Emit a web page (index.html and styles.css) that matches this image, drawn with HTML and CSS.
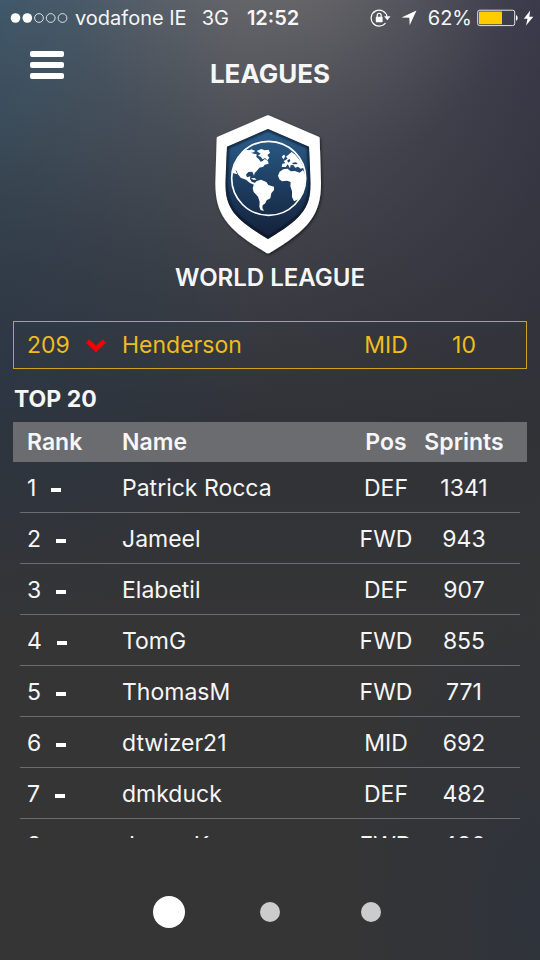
FILE: index.html
```html
<!DOCTYPE html>
<html lang="en">
<head>
<meta charset="utf-8">
<meta name="viewport" content="width=device-width, initial-scale=1">
<title>Leagues</title>
<link rel="stylesheet" href="styles.css">
</head>
<body>
<div class="app">
  <div class="status">
    <div class="status-left">
      <svg class="signal" width="58" height="12" viewBox="0 0 58 12" aria-hidden="true">
        <g fill="#fff"><circle cx="5.500" cy="6" r="4.800"/><circle cx="17.300" cy="6" r="4.800"/></g>
        <g fill="none" stroke="#fff" stroke-width=".8"><circle cx="29" cy="6" r="4.400"/><circle cx="40.700" cy="6" r="4.400"/><circle cx="52.500" cy="6" r="4.400"/></g>
      </svg>
      <span>vodafone IE</span>
      <span class="network">3G</span>
      <span class="clock">12:52</span>
    </div>
    <div class="status-right">
      <svg class="lock" width="21" height="18" viewBox="0 0 21 18" aria-hidden="true">
        <path d="M15.500 14A8 8 0 1 1 17 7.500" fill="none" stroke="#fff" stroke-width="1.200"/>
        <path d="M14 7.300h6.500l-3.200 4z" fill="#fff"/>
        <rect x="5.800" y="7.800" width="6.800" height="5.400" rx=".6" fill="#fff"/>
        <path d="M7.200 8.500V6.400a2 2 0 0 1 4 0v2.100" fill="none" stroke="#fff" stroke-width="1.200"/>
      </svg>
      <svg class="arrow" width="16" height="16" viewBox="0 0 16 16" aria-hidden="true"><path d="M15.500.5 8.700 15.300 8.300 7.800.5 7.500z" fill="#fff"/></svg>
      <span>62%</span>
      <svg class="battery" width="42" height="18" viewBox="0 0 42 18" aria-hidden="true">
        <rect x=".7" y="1.200" width="37" height="15.400" rx="2" fill="none" stroke="#fff" stroke-opacity=".85"/>
        <rect x="2" y="2.500" width="23" height="12.800" rx=".6" fill="#fc0"/>
        <path d="M39 6.300c2.200.5 2.200 5 0 5.400z" fill="#fff"/>
      </svg>
      <svg class="bolt" width="11" height="16" viewBox="0 0 11 16" aria-hidden="true"><path d="M7.200.5.800 8.700h3.700L3 15.500l7.300-8.700H6.300z" fill="#fff"/></svg>
    </div>
  </div>

  <header class="topbar">
    <button class="menu" type="button" aria-label="Menu"><i></i><i></i><i></i></button>
    <h1>LEAGUES</h1>
  </header>

  <main class="content">
    <section class="league">
      <svg class="shield" width="112" height="144" viewBox="42 26 336 432" role="img" aria-label="World League crest">
        <defs>
          <linearGradient id="navy" x1="0" y1="0" x2="0" y2="1"><stop offset="0" stop-color="#2d6290"/><stop offset=".5" stop-color="#1e3f62"/><stop offset="1" stop-color="#131f38"/></linearGradient>
          <filter id="shadow" x="-10%" y="-10%" width="120%" height="120%"><feDropShadow dx="3" dy="4" stdDeviation="4" flood-color="#000" flood-opacity=".6"/></filter>
          <filter id="inset" x="-10%" y="-10%" width="120%" height="120%"><feGaussianBlur stdDeviation="4"/></filter>
          <clipPath id="inner"><path d="M204 74L327 127L332 236C332 315 300 346 204 404C108 346 76 315 76 236L81 127Z"/></clipPath>
          <clipPath id="disc"><circle cx="206" cy="222" r="110"/></clipPath>
        </defs>
        <path d="M197 35Q204 31 211 35L356 97Q359 98 359 102L363 236C363 333 325 376 210 445Q204 449 198 445C83 376 46 333 46 236L50 102Q50 98 53 97Z" fill="#fff" filter="url(#shadow)"/>
        <g clip-path="url(#inner)">
          <path d="M70 60h270v350H70z" fill="url(#navy)"/>
          <path d="M204 74L327 127L332 236C332 315 300 346 204 404C108 346 76 315 76 236L81 127Z" fill="none" stroke="#08111f" stroke-width="8" filter="url(#inset)"/>
        </g>
        <g fill="#fff" clip-path="url(#disc)">
          <path d="M98 206L98 178L112 152L134 136L150 138L156 147L170 150L169 158L176 164L182 172L188 170L194 164L204 170L206 178L194 181L190 187L178 190L170 200L164 206L162 214L157 202L145 203L138 211L141 219L151 216L150 224L155 232L166 236L162 241L150 236L138 226L122 220L114 210L110 200L106 196L112 210L106 208Z"/>
          <path d="M144 141L154 135L166 140L158 145ZM170 140L184 134L194 138L206 136L210 146L202 152L208 160L202 168L195 161L188 165L182 157L174 154L182 148Z"/>
          <path d="M152 222L164 221L170 226L160 226Z"/>
          <path d="M162 238L170 230L183 226L199 233L205 242L222 247L222 257L214 267L211 282L200 288L196 297L188 303L187 311L192 319L182 318L178 307L179 292L174 277L161 263L158 252Z"/>
          <path d="M234 214L239 202L250 195L263 193L272 201L285 200L299 205L309 197L320 218L312 258L298 284L282 291L276 278L276 261L271 245L272 233L261 229L246 231L238 225Z"/>
          <path d="M245 188L247 178L256 177L251 170L263 163L258 157L267 150L275 143L286 151L302 171L311 190L302 193L294 187L286 190L279 181L272 183L270 192L263 180L257 188Z"/>
          <path d="M245 158L251 151L256 154L251 165Z"/>
        </g>
        <path d="M262 168l7-4 2 6-7 5zM276 176l12-2 5 5-13 1z" fill="#1e3f62"/>
        <circle cx="206" cy="222" r="111" fill="none" stroke="#fff" stroke-width="5"/>
      </svg>
      <h2>WORLD LEAGUE</h2>
    </section>

    <section class="mine" aria-label="Your rank">
      <span>209</span>
      <svg width="22" height="16" viewBox="0 0 22 16" role="img" aria-label="Down"><path d="M1 5.800 4.200 2.500 11 8.500l6.800-6L21 5.800 11 15.300z" fill="#f60000"/></svg>
      <span>Henderson</span>
      <span class="mid">MID</span>
      <span class="mid">10</span>
    </section>

    <h3>TOP 20</h3>
    <div class="list">
      <table>
        <colgroup><col class="c-rank"><col><col class="c-pos"><col class="c-sprints"></colgroup>
        <thead><tr><th>Rank</th><th>Name</th><th class="mid">Pos</th><th class="mid">Sprints</th></tr></thead>
        <tbody>
          <tr><td>1<i class="same"></i></td><td>Patrick Rocca</td><td class="mid">DEF</td><td class="mid">1341</td></tr>
          <tr><td>2<i class="same"></i></td><td>Jameel</td><td class="mid">FWD</td><td class="mid">943</td></tr>
          <tr><td>3<i class="same"></i></td><td>Elabetil</td><td class="mid">DEF</td><td class="mid">907</td></tr>
          <tr><td>4<i class="same"></i></td><td>TomG</td><td class="mid">FWD</td><td class="mid">855</td></tr>
          <tr><td>5<i class="same"></i></td><td>ThomasM</td><td class="mid">FWD</td><td class="mid">771</td></tr>
          <tr><td>6<i class="same"></i></td><td>dtwizer21</td><td class="mid">MID</td><td class="mid">692</td></tr>
          <tr><td>7<i class="same"></i></td><td>dmkduck</td><td class="mid">DEF</td><td class="mid">482</td></tr>
          <tr><td>8<i class="same"></i></td><td>JamesK</td><td class="mid">FWD</td><td class="mid">480</td></tr>
        </tbody>
      </table>
    </div>
  </main>

  <nav class="pager" aria-label="Pages">
    <button type="button" class="dot current" aria-label="Page 1"></button>
    <button type="button" class="dot" aria-label="Page 2"></button>
    <button type="button" class="dot" aria-label="Page 3"></button>
  </nav>
</div>
</body>
</html>
```
FILE: styles.css
```css
* { box-sizing: border-box; }

body {
  margin: 0;
  color: #f6f6f6;
  font-family: Inter, "Liberation Sans", sans-serif;
  font-size: 23px;
  line-height: 30px;
}

h1, h2, h3 { margin: 0; font-weight: 600; }
button { border: 0; padding: 0; background: none; }
svg { display: block; flex: none; }

.app {
  display: flex;
  flex-direction: column;
  height: 100vh;
  overflow: hidden;
  background:
    radial-gradient(ellipse 35% 35% at 100% 95%, rgba(44, 50, 60, .75), rgba(44, 50, 60, 0)),
    radial-gradient(ellipse 50% 25% at 0% 40%, rgba(42, 56, 72, .6), rgba(42, 56, 72, 0)),
    linear-gradient(rgba(48, 50, 56, 0) 0%, rgba(48, 50, 56, .45) 18%, rgba(48, 50, 56, .75) 31%, #303237 44%, #353536 65%),
    radial-gradient(ellipse 40% 18% at 54% 0%, rgba(112, 112, 112, .55), rgba(112, 112, 112, 0)),
    linear-gradient(90deg, #40586a 0%, #5a5c64 45%, #54545e 60%, #3a3a4a 100%);
}

.status {
  display: flex;
  justify-content: space-between;
  align-items: center;
  height: 36px;
  padding: 0 8px 0 10px;
  font-size: 20px;
}
.status-left, .status-right { display: flex; align-items: center; }
.signal { margin-right: 7px; }
.network { margin-left: 15px; }
.clock { margin-left: 18px; font-weight: 600; }
.arrow { margin: 0 11px 0 10px; }
.battery { margin: 0 4px 0 5px; }
.status-right { margin-right: -2px; }

.topbar {
  display: grid;
  grid-template-columns: 1fr auto 1fr;
  padding: 15px 30px 0;
}
.menu {
  display: grid;
  gap: 5px;
  width: 34px;
  align-self: start;
}
.menu i { height: 6px; border-radius: 2px; background: #fff; }
h1 { padding-top: 8px; font-size: 26px; font-weight: 700; }

.content {
  display: flex;
  flex-direction: column;
  flex: 1;
  min-height: 0;
  padding: 24px 13px 0;
}
.league { display: flex; flex-direction: column; align-items: center; gap: 6px; }
h2 { font-size: 24px; }

.mine {
  display: grid;
  grid-template-columns: 58px 37px 1fr 84px 72px;
  align-items: center;
  height: 48px;
  margin-top: 28px;
  padding: 0 26px 0 13px;
  border: 1px solid #cda01e;
  color: #f0bc1c;
}
.mid { text-align: center; }

h3 { margin: 15px 0 8px 1px; font-size: 23px; font-weight: 700; }

.list { flex: 1; min-height: 0; overflow: hidden; }
table { width: 100%; table-layout: fixed; border-collapse: collapse; }
.c-rank { width: 109px; }
.c-pos { width: 76px; }
.c-sprints { width: 103px; }
th, td { padding: 0; text-align: left; }
th { height: 40px; font-weight: 600; }
td { height: 51px; }
th:first-child, td:first-child { padding-left: 14px; }
th:last-child, td:last-child { padding-right: 23px; }
th.mid, td.mid { text-align: center; }
thead tr { background: #6b6c70; }
tbody tr {
  background: linear-gradient(#6a6c6f, #6a6c6f) center bottom / calc(100% - 14px) 1px no-repeat;
}
.same {
  display: inline-block;
  width: 10px;
  height: 4px;
  margin-left: 15px;
  vertical-align: 4px;
  background: #fff;
}

.pager {
  display: grid;
  grid-template-columns: repeat(3, 101px);
  justify-content: center;
  place-items: center;
  height: 122px;
  padding-top: 26px;
}
.dot { width: 20px; height: 20px; border-radius: 50%; background: #ccc; }
.dot.current { width: 32px; height: 32px; background: #fff; }
```
